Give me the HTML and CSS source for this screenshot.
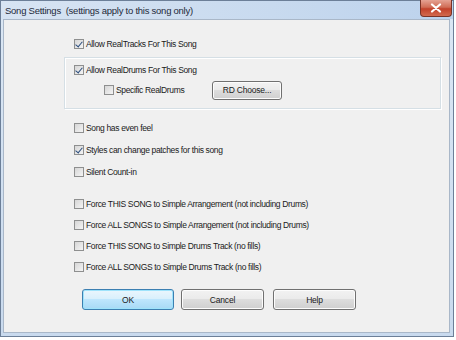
FILE: index.html
```html
<!DOCTYPE html>
<html lang="en">
<head>
  <meta charset="UTF-8">
  <title>Song Settings</title>
  <link rel="stylesheet" href="styles.css">
</head>
<body>
  <div class="window">
    <div class="titlebar">
      <span class="title">Song Settings  (settings apply to this song only)</span>
      <div class="close">
        <svg width="12" height="10" viewBox="0 0 12 10"><path d="M2 1.5 L10 8.5 M10 1.5 L2 8.5" stroke="#fff" stroke-width="2.2" stroke-linecap="round"/></svg>
      </div>
    </div>

    <div class="client">
      <label class="check first"><span class="box on"></span>Allow RealTracks For This Song</label>

      <div class="group">
        <label class="check"><span class="box on"></span>Allow RealDrums For This Song</label>
        <div class="sub-row">
          <label class="check"><span class="box"></span>Specific RealDrums</label>
          <button class="btn small">RD Choose...</button>
        </div>
      </div>

      <div class="list">
        <label class="check"><span class="box"></span>Song has even feel</label>
        <label class="check"><span class="box on"></span>Styles can change patches for this song</label>
        <label class="check"><span class="box"></span>Silent Count-in</label>
      </div>

      <div class="list force">
        <label class="check"><span class="box"></span>Force THIS SONG to Simple Arrangement (not including Drums)</label>
        <label class="check"><span class="box"></span>Force ALL SONGS to Simple Arrangement (not including Drums)</label>
        <label class="check"><span class="box"></span>Force THIS SONG to Simple Drums Track (no fills)</label>
        <label class="check"><span class="box"></span>Force ALL SONGS to Simple Drums Track (no fills)</label>
      </div>

      <div class="buttons">
        <button class="btn default ok">OK</button>
        <button class="btn cancel">Cancel</button>
        <button class="btn help">Help</button>
      </div>
    </div>
  </div>
</body>
</html>
```

FILE: styles.css
```css
body {
  margin: 0;
  width: 456px;
  height: 340px;
  overflow: hidden;
  font-family: "Liberation Sans", Arial, sans-serif;
  font-size: 8.5px;
  letter-spacing: -0.35px;
  color: #1a1a1a;
  background: #fff;
}
.window {
  width: 454px;
  height: 337px;
  box-sizing: border-box;
  border: 1px solid #6c7f98;
  background: linear-gradient(to bottom, #dbe7f4, #c9daee);
  padding: 0 3px 3px 2px;
  display: flex;
  flex-direction: column;
}
.titlebar {
  height: 18px;
  display: flex;
  align-items: center;
  position: relative;
  background: linear-gradient(to right, #d7e4f3, #c8daef 60%, #bcd2ec);
  margin: 0 -3px 0 -2px;
  padding-left: 4px;
}
.title {
  font-size: 9.5px;
  letter-spacing: -0.25px;
  color: #1e2a3a;
  white-space: pre;
}
.close {
  position: absolute;
  right: 1px;
  top: -1px;
  width: 32px;
  height: 17px;
  border: 1px solid #7a3326;
  border-top: none;
  border-radius: 0 0 4px 4px;
  background: linear-gradient(to bottom, #e5a293, #d06d56 45%, #c2412a 55%, #d26a4e);
  display: flex;
  align-items: center;
  justify-content: center;
  box-sizing: border-box;
}
.client {
  flex: 1;
  background: #f0f0f0;
  border: 1px solid #a9b7c8;
  display: flex;
  flex-direction: column;
  padding-left: 70px;
}
.check {
  display: flex;
  align-items: center;
  height: 12px;
  white-space: nowrap;
}
.first {
  margin-top: 18px;
}
.box {
  width: 10px;
  height: 10px;
  box-sizing: border-box;
  border: 1px solid #8e8f8f;
  background: linear-gradient(135deg, #d6d6d6, #f4f4f4);
  margin-right: 2px;
  flex: none;
  position: relative;
}
.box.on::after {
  content: "";
  position: absolute;
  left: 2px;
  top: 0px;
  width: 3px;
  height: 6px;
  border: solid #2b4d7d;
  border-width: 0 1.5px 1.5px 0;
  transform: rotate(40deg);
}
.group {
  margin: 7px 8px 0 -10px;
  border: 1px solid #d5dfe5;
  box-shadow: inset 1px 1px 0 #fff, 1px 1px 0 #fff;
  padding: 6px 0 8px 9px;
  display: flex;
  flex-direction: column;
  gap: 4px;
}
.sub-row {
  display: flex;
  align-items: center;
  padding-left: 30px;
  height: 20px;
}
.sub-row .check {
  width: 108px;
}
.btn {
  font-family: inherit;
  font-size: 8.5px;
  letter-spacing: -0.2px;
  color: #1a1a1a;
  border: 1px solid #707070;
  border-radius: 3px;
  background: linear-gradient(to bottom, #f2f2f2, #ebebeb 45%, #dddddd 50%, #cfcfcf);
  box-shadow: inset 0 0 0 1px #fcfcfc;
  padding: 0;
  height: 19px;
}
.small {
  width: 70px;
}
.list {
  display: flex;
  flex-direction: column;
  gap: 10px;
  margin-top: 13px;
}
.force {
  margin-top: 20px;
  gap: 9px;
}
.buttons {
  display: flex;
  gap: 7px;
  margin-top: 16px;
  margin-left: 8px;
}
.buttons .btn {
  height: 21px;
  width: 83px;
}
.buttons .ok {
  width: 92px;
  border-color: #3c7fb1;
  background: linear-gradient(to bottom, #eaf6fd, #d9f0fc 45%, #bee6fd 50%, #a7d9f5);
  box-shadow: inset 0 0 0 1px #9ee3fb;
}
.buttons .help {
  margin-left: 2px;
}
```
